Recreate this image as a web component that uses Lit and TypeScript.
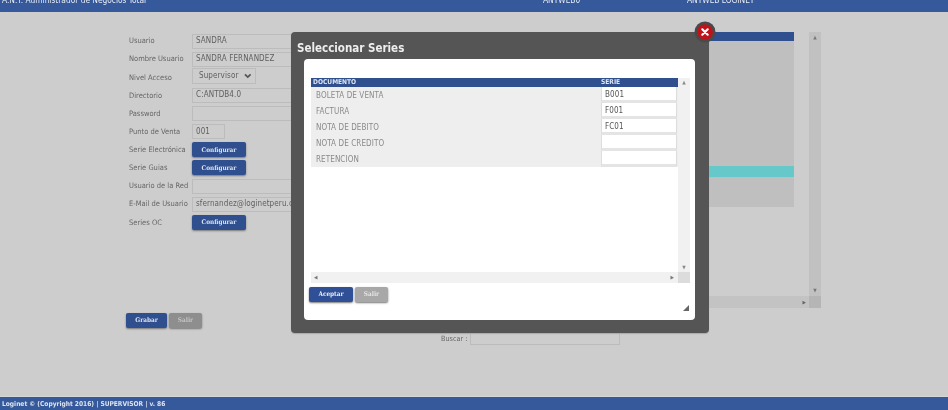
import { LitElement, html, css } from "lit";
import { customElement } from "lit/decorators.js";

const FORM = [
  ["Usuario", "input", "SANDRA"],
  ["Nombre Usuario", "input", "SANDRA FERNANDEZ"],
  ["Nivel Acceso", "select", "Supervisor"],
  ["Directorio", "input", "C:ANTDB4.0"],
  ["Password", "input", ""],
  ["Punto de Venta", "short", "001"],
  ["Serie Electrónica", "button", "Configurar"],
  ["Serie Guias", "button", "Configurar"],
  ["Usuario de la Red", "input", ""],
  ["E-Mail de Usuario", "input", "sfernandez@loginetperu.com"],
  ["Series OC", "button", "Configurar"],
];

const SERIES = [
  ["BOLETA DE VENTA", "B001"],
  ["FACTURA", "F001"],
  ["NOTA DE DEBITO", "FC01"],
  ["NOTA DE CREDITO", ""],
  ["RETENCION", ""],
];

@customElement("app-root")
export class AppRoot extends LitElement {
  static styles = css`
    :host {
      display: block;
      width: 948px;
      height: 410px;
      overflow: hidden;
      position: relative;
      background: #cdcdcd;
      color: #666;
      font-family: "DejaVu Sans", sans-serif;
      font-size: 8px;
      line-height: 1;
      font-stretch: condensed;
    }
    .page { display: flex; flex-direction: column; height: 410px; filter: blur(0.35px); }
    .top {
      height: 12px; flex: none; background: #35599b; color: #e8edf6; position: relative;
      display: grid; grid-template-columns: 541px 144px 1fr; padding-left: 2px; box-sizing: border-box;
      overflow: hidden; font-size: 8.3px; line-height: 8px; align-items: start;
    }
    .top span { margin-top: -4px; }
    .main { flex: 1; display: grid; grid-template-columns: 296px 1fr; min-height: 0; }
    .form { padding: 20px 0 0 126px; display: flex; flex-direction: column; }
    .grid { display: grid; grid-template-columns: 66px 1fr; grid-auto-rows: 18.13px; align-items: center; }
    .lab { padding-left: 3px; white-space: nowrap; font-size: 7.5px; color: #666; }
    .inp {
      box-sizing: border-box; height: 15px; width: 104px; border: 1px solid #bcbcbc; padding: 0 3px;
      display: flex; align-items: center; white-space: nowrap; overflow: hidden; letter-spacing: 0.1px; color: #606060;
    }
    .inp.short { width: 33px; }
    .inp.sel { width: 64px; height: 16px; padding-left: 6px; gap: 6px; margin-bottom: 2px; }
    .btn {
      box-sizing: border-box; display: inline-flex; align-items: center; justify-content: center;
      height: 15px; font-family: "DejaVu Serif", serif; font-weight: bold; font-size: 6.4px; border-radius: 2px; color: #dfe5f1;
      background: #2f4f8f; box-shadow: 0 1px 2px #777;
    }
    .btn.cfg { width: 54px; }
    .btn.gray { background: #8e8e8e; color: #c4c4c4; }
    .actions { display: flex; gap: 2px; margin-top: 81.5px; }
    .actions .btn:first-child { width: 41px; }
    .actions .gray { width: 33px; }
    .list { padding-top: 20px; display: flex; flex-direction: column; }
    .listbox { display: grid; grid-template-columns: 498px 15px 12px; grid-template-rows: 264px 12px; width: 525px; }
    .listarea { display: flex; flex-direction: column; }
    .lhead { height: 9px; background: #2f4f8f; flex: none; }
    .lbody { height: 125px; background: #bfbfbf; flex: none; }
    .lteal { height: 11px; background: #66c8c9; flex: none; }
    .lbody2 { height: 30px; background: #bfbfbf; flex: none; }
    .vsb {
      grid-column: 3; background: #c1c1c1; display: flex; flex-direction: column;
      justify-content: space-between; align-items: center; padding: 3px 0; color: #777; font-size: 5px; box-sizing: border-box;
    }
    .hsb {
      grid-column: 1 / 3; background: #c3c3c3; display: flex; justify-content: flex-end; align-items: center;
      padding-right: 3px; color: #666; font-size: 5px; box-sizing: border-box;
    }
    .corner { background: #b5b5b5; }
    .search { display: flex; align-items: center; margin: 24px 0 0 145px; gap: 3px; font-size: 7.2px; }
    .search div { box-sizing: border-box; width: 150px; height: 13px; border: 1px solid #bcbcbc; }
    .foot {
      height: 13px; box-sizing: border-box; padding: 1px 0 0 2px; flex: none; background: #35599b; color: #dde4f1; font-weight: bold; font-size: 6.6px;
      display: flex; align-items: center; box-shadow: 0 -1px 0 #d6d6d6;
    }
    .modal {
      position: absolute; left: 291px; top: 32px; width: 418px; height: 301px; box-sizing: border-box;
      background: #555; border-radius: 4px; padding: 9px 14px 13px 13px; display: flex; flex-direction: column;
      filter: blur(0.35px); box-shadow: 0 1px 1px #aaa;
    }
    .title { margin: 0 0 0 -7px; height: 18px; color: #eee; font-weight: bold; font-size: 11.5px; line-height: 15px; }
    .body {
      flex: 1; background: #fff; border-radius: 4px; padding: 19px 5px 0 7px; position: relative;
      display: flex; flex-direction: column; align-items: flex-start;
    }
    .tbl { display: grid; grid-template-columns: 367px 12px; grid-template-rows: 194px 11px; width: 379px; }
    .tarea { display: flex; flex-direction: column; }
    .thead { display: grid; grid-template-columns: 290px 77px; height: 9px; background: #2f4f8f; color: #dfe6f3; font-weight: bold; font-size: 6.6px; line-height: 9px; }
    .thead span:first-child { padding-left: 2px; }
    .row { display: grid; grid-template-columns: 290px 76px; height: 16px; background: #eee; align-items: stretch; font-size: 8px; color: #8a8a8a; letter-spacing: 0.1px; }
    .row > span { align-self: center; padding: 1px 0 0 5px; }
    .cell { background: #fff; border: 1px solid #ddd; border-top: 0; border-bottom: 3px solid #e4e4e4; color: #555; display: flex; align-items: center; padding: 2px 0 0 3px; box-sizing: border-box; }
    .mv { background: #f1f1f1; display: flex; flex-direction: column; justify-content: space-between; align-items: center; padding: 2px 0; color: #888; font-size: 5px; box-sizing: border-box; }
    .mh { background: #f1f1f1; display: flex; justify-content: space-between; align-items: center; padding: 0 4px 0 3px; color: #777; font-size: 5px; box-sizing: border-box; }
    .mc { background: #dcdcdc; }
    .mbtns { display: flex; gap: 2px; margin: 4px 0 0 -2px; }
    .mbtns .btn:first-child { width: 44px; background: #2f5096; color: #eef1f8; }
    .mbtns .gray { width: 33px; background: #a8a8a8; color: #e6e6e6; }
    .grip { position: absolute; right: 6px; bottom: 9px; width: 6px; height: 6px; }
    .close { position: absolute; left: 694px; top: 21px; width: 22px; height: 22px; filter: blur(0.3px); }
  `;

  render() {
    return html`
      <div class="page">
        <header class="top">
          <span>A.N.T. Administrador de Negocios Total</span><span>ANTWEB0</span><span>ANTWEB LOGINET</span>
        </header>
        <main class="main">
          <section class="form">
            <div class="grid">
              ${FORM.map(([l, t, v]) => html`<div class="lab">${l}</div>${this.field(t, v)}`)}
            </div>
            <div class="actions"><span class="btn">Grabar</span><span class="btn gray">Salir</span></div>
          </section>
          <section class="list">
            <div class="listbox">
              <div class="listarea">
                <div class="lhead"></div>
                <div class="lbody"></div>
                <div class="lteal"></div>
                <div class="lbody2"></div>
              </div>
              <div></div>
              <div class="vsb"><span>▲</span><span>▼</span></div>
              <div class="hsb"><span>▶</span></div>
              <div class="corner"></div>
            </div>
            <div class="search"><span>Buscar :</span><div></div></div>
          </section>
        </main>
        <footer class="foot">Loginet © (Copyright 2016) | SUPERVISOR | v. 86</footer>
      </div>
      <div class="modal">
        <h1 class="title">Seleccionar Series</h1>
        <div class="body">
          <div class="tbl">
            <div class="tarea">
              <div class="thead"><span>DOCUMENTO</span><span>SERIE</span></div>
              ${SERIES.map(([d, s]) => html`<div class="row"><span>${d}</span><div class="cell">${s}</div></div>`)}
            </div>
            <div class="mv"><span>▲</span><span>▼</span></div>
            <div class="mh"><span>◀</span><span>▶</span></div>
            <div class="mc"></div>
          </div>
          <div class="mbtns"><span class="btn">Aceptar</span><span class="btn gray">Salir</span></div>
          <svg class="grip" viewBox="0 0 6 6"><path d="M6 0V6H0Z" fill="#666"/></svg>
        </div>
      </div>
      <svg class="close" viewBox="0 0 22 22">
        <circle cx="11" cy="11" r="10.5" fill="#4a4a4a"/>
        <circle cx="11" cy="11" r="7.8" fill="#c1121c"/>
        <path d="M8.3 8.3l5.4 5.4M13.7 8.3l-5.4 5.4" stroke="#fff" stroke-width="2.2" stroke-linecap="round"/>
      </svg>
    `;
  }

  field(type: string, value: string) {
    if (type === "button") return html`<div><span class="btn cfg">${value}</span></div>`;
    if (type === "select")
      return html`<div class="inp sel">${value}
        <svg width="8" height="6" viewBox="0 0 8 6"><path d="M1 1.2l3 3 3-3" fill="none" stroke="#555" stroke-width="1.8"/></svg></div>`;
    return html`<div class="inp ${type === "short" ? "short" : ""}">${value}</div>`;
  }
}
